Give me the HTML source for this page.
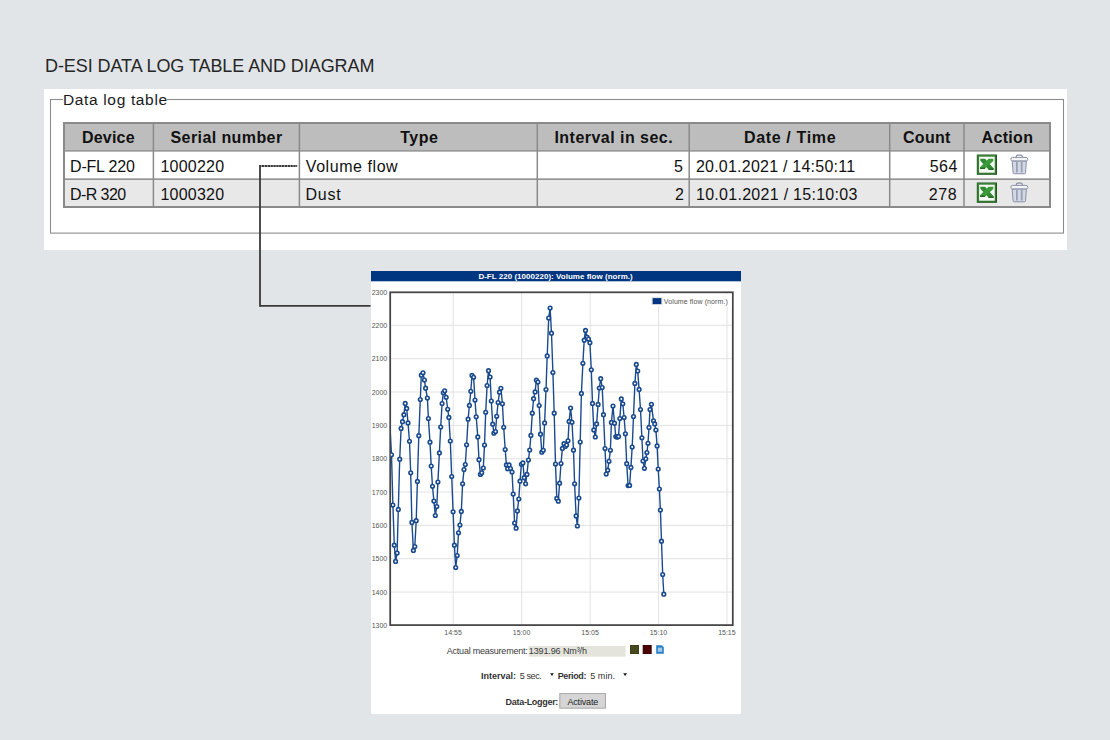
<!DOCTYPE html>
<html><head><meta charset="utf-8"><style>
html,body{margin:0;padding:0;}
body{width:1110px;height:740px;background:#e1e5e8;position:relative;overflow:hidden;font-family:"Liberation Sans",sans-serif;}
svg{position:absolute;left:0;top:0;}
</style></head><body>
<svg width="1110" height="740" viewBox="0 0 1110 740" font-family="Liberation Sans">
<defs><clipPath id="pc"><rect x="390.7" y="293" width="341.5" height="331.4"/></clipPath></defs>
<!-- panel -->
<rect x="44" y="89" width="1023" height="161" fill="#fff"/>
<rect x="50.5" y="99.5" width="1013" height="133.6" fill="none" stroke="#8c8c8c" stroke-width="1.1"/>
<rect x="63" y="94" width="104" height="12" fill="#fff"/>
<!-- table -->
<rect x="63" y="122" width="987.5" height="29" fill="#bdbdbd"/>
<rect x="63" y="151" width="987.5" height="28" fill="#fff"/>
<rect x="63" y="179" width="987.5" height="28" fill="#e8e8e8"/>
<rect x="64" y="123" width="986" height="84" fill="none" stroke="#8a8a8a" stroke-width="2"/>
<rect x="63" y="150.3" width="987" height="1.3" fill="#8a8a8a"/>
<rect x="63" y="178.4" width="987" height="1.5" fill="#8a8a8a"/>
<rect x="152.65" y="122" width="1.5" height="85" fill="#8a8a8a"/><rect x="298.65" y="122" width="1.5" height="85" fill="#8a8a8a"/><rect x="536.55" y="122" width="1.5" height="85" fill="#8a8a8a"/><rect x="688.45" y="122" width="1.5" height="85" fill="#8a8a8a"/><rect x="888.95" y="122" width="1.5" height="85" fill="#8a8a8a"/><rect x="963.25" y="122" width="1.5" height="85" fill="#8a8a8a"/>
<g transform="translate(976.8,154.5)">
<rect x="0" y="0" width="20.2" height="20.3" fill="#1d551d"/>
<rect x="0.5" y="0.5" width="18.6" height="18.8" fill="#3a7f36"/>
<rect x="2.3" y="2.2" width="15.6" height="16" fill="#f6faf4"/>
<path d="M3.5,4.3 L8.2,4.3 L16.8,13.8 L16.8,15.3 L12,15.3 L3.5,6.2 Z" fill="#2f8a30"/>
<path d="M16.5,4.3 L11.8,4.3 L3.2,12.8 L3.2,14.3 L8,14.3 L16.5,6.4 Z" fill="#3d9a3b"/>
<path d="M3.2,13.2 L8.2,13.2 L8.2,14.4 L3.2,14.4z" fill="#1f5f1f"/>
<path d="M11.8,14.2 L16.8,14.2 L16.8,15.4 L11.8,15.4z" fill="#1f5f1f"/>
</g><g transform="translate(976.8,182.5)">
<rect x="0" y="0" width="20.2" height="20.3" fill="#1d551d"/>
<rect x="0.5" y="0.5" width="18.6" height="18.8" fill="#3a7f36"/>
<rect x="2.3" y="2.2" width="15.6" height="16" fill="#f6faf4"/>
<path d="M3.5,4.3 L8.2,4.3 L16.8,13.8 L16.8,15.3 L12,15.3 L3.5,6.2 Z" fill="#2f8a30"/>
<path d="M16.5,4.3 L11.8,4.3 L3.2,12.8 L3.2,14.3 L8,14.3 L16.5,6.4 Z" fill="#3d9a3b"/>
<path d="M3.2,13.2 L8.2,13.2 L8.2,14.4 L3.2,14.4z" fill="#1f5f1f"/>
<path d="M11.8,14.2 L16.8,14.2 L16.8,15.4 L11.8,15.4z" fill="#1f5f1f"/>
</g><g transform="translate(1010,154)">
<path d="M6.3,3.6 v-1 q0,-1.4 1.4,-1.4 h3.2 q1.4,0 1.4,1.4 v1" fill="none" stroke="#8a91a5" stroke-width="1.2"/>
<rect x="0.9" y="3.4" width="16.8" height="3.6" rx="1.6" fill="#f2f4f8" stroke="#8a91a5" stroke-width="1"/>
<path d="M2.2,7.2 h14.2 l-0.9,11.6 q-0.1,1 -1.1,1 h-10.2 q-1,0 -1.1,-1z" fill="#d3d8e5" stroke="#8a91a5" stroke-width="1"/>
<rect x="6" y="8" width="1.8" height="10.5" fill="#9aa1b4"/>
<rect x="10.8" y="8" width="1.8" height="10.5" fill="#9aa1b4"/>
</g><g transform="translate(1010,182)">
<path d="M6.3,3.6 v-1 q0,-1.4 1.4,-1.4 h3.2 q1.4,0 1.4,1.4 v1" fill="none" stroke="#8a91a5" stroke-width="1.2"/>
<rect x="0.9" y="3.4" width="16.8" height="3.6" rx="1.6" fill="#f2f4f8" stroke="#8a91a5" stroke-width="1"/>
<path d="M2.2,7.2 h14.2 l-0.9,11.6 q-0.1,1 -1.1,1 h-10.2 q-1,0 -1.1,-1z" fill="#d3d8e5" stroke="#8a91a5" stroke-width="1"/>
<rect x="6" y="8" width="1.8" height="10.5" fill="#9aa1b4"/>
<rect x="10.8" y="8" width="1.8" height="10.5" fill="#9aa1b4"/>
</g>
<!-- connector -->
<path d="M260,305.9 H370.5" stroke="#3a3a38" stroke-width="1.8" fill="none"/>
<path d="M260,306.8 V166" stroke="#3a3a38" stroke-width="1.8" fill="none"/>
<path d="M259.1,166 H297.2" stroke="#3a3a38" stroke-width="1.8" fill="none" stroke-dasharray="2.4 0.45"/>
<!-- chart -->
<rect x="371" y="271" width="370" height="443" fill="#fff"/>
<rect x="371" y="271" width="370" height="10.3" fill="#003580"/>
<g stroke="#e2e2e2" stroke-width="1"><line x1="453.2" y1="293" x2="453.2" y2="624" /><line x1="521.7" y1="293" x2="521.7" y2="624" /><line x1="590.2" y1="293" x2="590.2" y2="624" /><line x1="658.6" y1="293" x2="658.6" y2="624" /><line x1="727.0" y1="293" x2="727.0" y2="624" /><line x1="391" y1="325.3" x2="732" y2="325.3" /><line x1="391" y1="358.7" x2="732" y2="358.7" /><line x1="391" y1="392.0" x2="732" y2="392.0" /><line x1="391" y1="425.4" x2="732" y2="425.4" /><line x1="391" y1="458.7" x2="732" y2="458.7" /><line x1="391" y1="492.0" x2="732" y2="492.0" /><line x1="391" y1="525.4" x2="732" y2="525.4" /><line x1="391" y1="558.7" x2="732" y2="558.7" /><line x1="391" y1="592.1" x2="732" y2="592.1" /></g>
<rect x="390.2" y="292.3" width="342.6" height="332.8" fill="none" stroke="#444" stroke-width="1.75"/>
<rect x="650.5" y="294" width="81" height="12.5" fill="#fff"/><rect x="652" y="297.6" width="10" height="7" fill="none" stroke="#e0e0e0" stroke-width="1"/>
<rect x="652.6" y="298.1" width="8.8" height="6" fill="#003580"/>
<g clip-path="url(#pc)">
<path d="M388.0,390.0 L391.5,454.8 L392.9,505.1 L394.3,545.2 L395.6,561.4 L397.1,553.1 L398.3,509.4 L399.7,459.2 L401.1,428.4 L402.5,421.7 L403.9,414.7 L405.2,403.4 L406.7,408.4 L408.0,422.9 L409.5,441.3 L410.7,472.8 L411.9,522.4 L413.4,550.4 L414.8,546.5 L416.2,520.7 L417.4,481.4 L418.8,435.7 L420.3,399.5 L421.3,375.2 L423.0,372.8 L424.4,380.1 L425.6,388.2 L427.4,398.1 L428.4,418.6 L430.0,442.2 L431.2,466.1 L432.5,486.3 L433.9,501.1 L435.3,515.5 L436.8,506.6 L437.9,482.1 L439.4,452.9 L440.7,427.1 L442.1,403.5 L443.3,392.8 L444.7,390.8 L446.2,397.3 L447.7,409.3 L448.9,417.4 L450.3,441.0 L451.7,476.5 L453.1,511.8 L454.4,545.2 L455.7,567.6 L457.2,555.5 L458.5,532.8 L459.9,525.1 L461.3,511.4 L462.6,483.8 L464.0,469.6 L465.3,464.6 L466.6,444.8 L468.1,419.2 L469.4,405.4 L470.8,391.3 L472.0,375.4 L473.6,377.3 L475.0,400.1 L476.2,416.8 L477.8,436.9 L479.0,459.7 L480.4,474.4 L481.7,472.8 L483.3,468.0 L484.5,445.1 L485.7,412.3 L487.1,385.5 L488.5,370.7 L490.1,377.0 L491.3,401.0 L492.7,424.2 L493.9,433.2 L495.5,431.5 L496.7,416.3 L498.1,402.6 L499.5,392.2 L500.9,388.3 L502.4,403.8 L503.7,427.3 L505.2,449.5 L506.4,464.9 L507.6,468.8 L509.1,464.9 L510.5,468.6 L512.0,472.0 L513.2,494.1 L514.6,523.1 L516.1,528.2 L517.4,510.9 L518.8,499.0 L520.0,481.2 L521.4,464.3 L522.9,462.9 L524.2,477.7 L525.6,483.8 L526.9,474.4 L528.4,460.1 L529.7,450.0 L530.9,435.4 L532.3,413.2 L533.6,398.7 L535.1,391.9 L536.4,380.2 L537.9,382.1 L539.2,405.6 L540.5,434.2 L541.8,452.2 L543.3,450.3 L544.6,422.9 L546.0,389.6 L547.2,355.9 L548.7,318.1 L550.1,308.0 L551.5,333.2 L552.9,372.6 L554.2,413.2 L555.5,464.1 L556.8,498.4 L558.3,501.2 L559.6,483.2 L561.0,463.5 L562.4,448.4 L564.0,443.7 L565.3,446.5 L566.6,445.1 L568.0,440.8 L569.1,421.4 L570.6,408.0 L572.0,422.3 L573.5,450.2 L574.6,483.8 L576.1,515.9 L577.4,526.0 L578.9,498.0 L580.2,442.1 L581.4,393.4 L582.9,363.3 L584.2,340.2 L585.5,330.4 L587.0,337.2 L588.5,339.0 L589.9,342.7 L591.3,369.8 L592.5,403.4 L593.8,429.9 L595.3,437.0 L596.6,423.9 L598.1,404.4 L599.3,388.0 L600.7,378.7 L602.2,387.6 L603.5,414.7 L605.0,448.6 L606.2,474.1 L607.7,470.2 L609.0,461.3 L610.4,450.3 L611.4,422.4 L613.0,406.0 L614.5,423.2 L615.8,436.6 L617.2,437.2 L618.5,436.4 L619.8,418.6 L621.3,398.9 L622.8,403.8 L624.1,417.5 L625.4,433.8 L626.7,463.7 L628.1,485.6 L629.6,485.4 L630.9,467.4 L632.2,447.0 L633.5,416.6 L634.9,383.4 L636.3,364.4 L637.7,371.1 L639.1,389.4 L640.5,409.5 L641.9,437.8 L643.0,461.0 L644.4,468.3 L645.8,458.8 L646.9,452.6 L648.0,443.3 L649.0,427.4 L650.0,409.6 L651.4,404.3 L653.5,420.8 L654.7,423.9 L655.9,430.1 L657.1,445.9 L658.2,469.0 L659.4,489.1 L660.4,510.0 L661.5,541.2 L662.7,574.5 L663.8,594.2" stroke="#1a4a8e" stroke-width="1.4" fill="none" stroke-linejoin="round"/>
<g fill="#fff" stroke="#1a4a8e" stroke-width="1.6"><circle cx="388.0" cy="390.0" r="1.8"/><circle cx="391.5" cy="454.8" r="1.8"/><circle cx="392.9" cy="505.1" r="1.8"/><circle cx="394.3" cy="545.2" r="1.8"/><circle cx="395.6" cy="561.4" r="1.8"/><circle cx="397.1" cy="553.1" r="1.8"/><circle cx="398.3" cy="509.4" r="1.8"/><circle cx="399.7" cy="459.2" r="1.8"/><circle cx="401.1" cy="428.4" r="1.8"/><circle cx="402.5" cy="421.7" r="1.8"/><circle cx="403.9" cy="414.7" r="1.8"/><circle cx="405.2" cy="403.4" r="1.8"/><circle cx="406.7" cy="408.4" r="1.8"/><circle cx="408.0" cy="422.9" r="1.8"/><circle cx="409.5" cy="441.3" r="1.8"/><circle cx="410.7" cy="472.8" r="1.8"/><circle cx="411.9" cy="522.4" r="1.8"/><circle cx="413.4" cy="550.4" r="1.8"/><circle cx="414.8" cy="546.5" r="1.8"/><circle cx="416.2" cy="520.7" r="1.8"/><circle cx="417.4" cy="481.4" r="1.8"/><circle cx="418.8" cy="435.7" r="1.8"/><circle cx="420.3" cy="399.5" r="1.8"/><circle cx="421.3" cy="375.2" r="1.8"/><circle cx="423.0" cy="372.8" r="1.8"/><circle cx="424.4" cy="380.1" r="1.8"/><circle cx="425.6" cy="388.2" r="1.8"/><circle cx="427.4" cy="398.1" r="1.8"/><circle cx="428.4" cy="418.6" r="1.8"/><circle cx="430.0" cy="442.2" r="1.8"/><circle cx="431.2" cy="466.1" r="1.8"/><circle cx="432.5" cy="486.3" r="1.8"/><circle cx="433.9" cy="501.1" r="1.8"/><circle cx="435.3" cy="515.5" r="1.8"/><circle cx="436.8" cy="506.6" r="1.8"/><circle cx="437.9" cy="482.1" r="1.8"/><circle cx="439.4" cy="452.9" r="1.8"/><circle cx="440.7" cy="427.1" r="1.8"/><circle cx="442.1" cy="403.5" r="1.8"/><circle cx="443.3" cy="392.8" r="1.8"/><circle cx="444.7" cy="390.8" r="1.8"/><circle cx="446.2" cy="397.3" r="1.8"/><circle cx="447.7" cy="409.3" r="1.8"/><circle cx="448.9" cy="417.4" r="1.8"/><circle cx="450.3" cy="441.0" r="1.8"/><circle cx="451.7" cy="476.5" r="1.8"/><circle cx="453.1" cy="511.8" r="1.8"/><circle cx="454.4" cy="545.2" r="1.8"/><circle cx="455.7" cy="567.6" r="1.8"/><circle cx="457.2" cy="555.5" r="1.8"/><circle cx="458.5" cy="532.8" r="1.8"/><circle cx="459.9" cy="525.1" r="1.8"/><circle cx="461.3" cy="511.4" r="1.8"/><circle cx="462.6" cy="483.8" r="1.8"/><circle cx="464.0" cy="469.6" r="1.8"/><circle cx="465.3" cy="464.6" r="1.8"/><circle cx="466.6" cy="444.8" r="1.8"/><circle cx="468.1" cy="419.2" r="1.8"/><circle cx="469.4" cy="405.4" r="1.8"/><circle cx="470.8" cy="391.3" r="1.8"/><circle cx="472.0" cy="375.4" r="1.8"/><circle cx="473.6" cy="377.3" r="1.8"/><circle cx="475.0" cy="400.1" r="1.8"/><circle cx="476.2" cy="416.8" r="1.8"/><circle cx="477.8" cy="436.9" r="1.8"/><circle cx="479.0" cy="459.7" r="1.8"/><circle cx="480.4" cy="474.4" r="1.8"/><circle cx="481.7" cy="472.8" r="1.8"/><circle cx="483.3" cy="468.0" r="1.8"/><circle cx="484.5" cy="445.1" r="1.8"/><circle cx="485.7" cy="412.3" r="1.8"/><circle cx="487.1" cy="385.5" r="1.8"/><circle cx="488.5" cy="370.7" r="1.8"/><circle cx="490.1" cy="377.0" r="1.8"/><circle cx="491.3" cy="401.0" r="1.8"/><circle cx="492.7" cy="424.2" r="1.8"/><circle cx="493.9" cy="433.2" r="1.8"/><circle cx="495.5" cy="431.5" r="1.8"/><circle cx="496.7" cy="416.3" r="1.8"/><circle cx="498.1" cy="402.6" r="1.8"/><circle cx="499.5" cy="392.2" r="1.8"/><circle cx="500.9" cy="388.3" r="1.8"/><circle cx="502.4" cy="403.8" r="1.8"/><circle cx="503.7" cy="427.3" r="1.8"/><circle cx="505.2" cy="449.5" r="1.8"/><circle cx="506.4" cy="464.9" r="1.8"/><circle cx="507.6" cy="468.8" r="1.8"/><circle cx="509.1" cy="464.9" r="1.8"/><circle cx="510.5" cy="468.6" r="1.8"/><circle cx="512.0" cy="472.0" r="1.8"/><circle cx="513.2" cy="494.1" r="1.8"/><circle cx="514.6" cy="523.1" r="1.8"/><circle cx="516.1" cy="528.2" r="1.8"/><circle cx="517.4" cy="510.9" r="1.8"/><circle cx="518.8" cy="499.0" r="1.8"/><circle cx="520.0" cy="481.2" r="1.8"/><circle cx="521.4" cy="464.3" r="1.8"/><circle cx="522.9" cy="462.9" r="1.8"/><circle cx="524.2" cy="477.7" r="1.8"/><circle cx="525.6" cy="483.8" r="1.8"/><circle cx="526.9" cy="474.4" r="1.8"/><circle cx="528.4" cy="460.1" r="1.8"/><circle cx="529.7" cy="450.0" r="1.8"/><circle cx="530.9" cy="435.4" r="1.8"/><circle cx="532.3" cy="413.2" r="1.8"/><circle cx="533.6" cy="398.7" r="1.8"/><circle cx="535.1" cy="391.9" r="1.8"/><circle cx="536.4" cy="380.2" r="1.8"/><circle cx="537.9" cy="382.1" r="1.8"/><circle cx="539.2" cy="405.6" r="1.8"/><circle cx="540.5" cy="434.2" r="1.8"/><circle cx="541.8" cy="452.2" r="1.8"/><circle cx="543.3" cy="450.3" r="1.8"/><circle cx="544.6" cy="422.9" r="1.8"/><circle cx="546.0" cy="389.6" r="1.8"/><circle cx="547.2" cy="355.9" r="1.8"/><circle cx="548.7" cy="318.1" r="1.8"/><circle cx="550.1" cy="308.0" r="1.8"/><circle cx="551.5" cy="333.2" r="1.8"/><circle cx="552.9" cy="372.6" r="1.8"/><circle cx="554.2" cy="413.2" r="1.8"/><circle cx="555.5" cy="464.1" r="1.8"/><circle cx="556.8" cy="498.4" r="1.8"/><circle cx="558.3" cy="501.2" r="1.8"/><circle cx="559.6" cy="483.2" r="1.8"/><circle cx="561.0" cy="463.5" r="1.8"/><circle cx="562.4" cy="448.4" r="1.8"/><circle cx="564.0" cy="443.7" r="1.8"/><circle cx="565.3" cy="446.5" r="1.8"/><circle cx="566.6" cy="445.1" r="1.8"/><circle cx="568.0" cy="440.8" r="1.8"/><circle cx="569.1" cy="421.4" r="1.8"/><circle cx="570.6" cy="408.0" r="1.8"/><circle cx="572.0" cy="422.3" r="1.8"/><circle cx="573.5" cy="450.2" r="1.8"/><circle cx="574.6" cy="483.8" r="1.8"/><circle cx="576.1" cy="515.9" r="1.8"/><circle cx="577.4" cy="526.0" r="1.8"/><circle cx="578.9" cy="498.0" r="1.8"/><circle cx="580.2" cy="442.1" r="1.8"/><circle cx="581.4" cy="393.4" r="1.8"/><circle cx="582.9" cy="363.3" r="1.8"/><circle cx="584.2" cy="340.2" r="1.8"/><circle cx="585.5" cy="330.4" r="1.8"/><circle cx="587.0" cy="337.2" r="1.8"/><circle cx="588.5" cy="339.0" r="1.8"/><circle cx="589.9" cy="342.7" r="1.8"/><circle cx="591.3" cy="369.8" r="1.8"/><circle cx="592.5" cy="403.4" r="1.8"/><circle cx="593.8" cy="429.9" r="1.8"/><circle cx="595.3" cy="437.0" r="1.8"/><circle cx="596.6" cy="423.9" r="1.8"/><circle cx="598.1" cy="404.4" r="1.8"/><circle cx="599.3" cy="388.0" r="1.8"/><circle cx="600.7" cy="378.7" r="1.8"/><circle cx="602.2" cy="387.6" r="1.8"/><circle cx="603.5" cy="414.7" r="1.8"/><circle cx="605.0" cy="448.6" r="1.8"/><circle cx="606.2" cy="474.1" r="1.8"/><circle cx="607.7" cy="470.2" r="1.8"/><circle cx="609.0" cy="461.3" r="1.8"/><circle cx="610.4" cy="450.3" r="1.8"/><circle cx="611.4" cy="422.4" r="1.8"/><circle cx="613.0" cy="406.0" r="1.8"/><circle cx="614.5" cy="423.2" r="1.8"/><circle cx="615.8" cy="436.6" r="1.8"/><circle cx="617.2" cy="437.2" r="1.8"/><circle cx="618.5" cy="436.4" r="1.8"/><circle cx="619.8" cy="418.6" r="1.8"/><circle cx="621.3" cy="398.9" r="1.8"/><circle cx="622.8" cy="403.8" r="1.8"/><circle cx="624.1" cy="417.5" r="1.8"/><circle cx="625.4" cy="433.8" r="1.8"/><circle cx="626.7" cy="463.7" r="1.8"/><circle cx="628.1" cy="485.6" r="1.8"/><circle cx="629.6" cy="485.4" r="1.8"/><circle cx="630.9" cy="467.4" r="1.8"/><circle cx="632.2" cy="447.0" r="1.8"/><circle cx="633.5" cy="416.6" r="1.8"/><circle cx="634.9" cy="383.4" r="1.8"/><circle cx="636.3" cy="364.4" r="1.8"/><circle cx="637.7" cy="371.1" r="1.8"/><circle cx="639.1" cy="389.4" r="1.8"/><circle cx="640.5" cy="409.5" r="1.8"/><circle cx="641.9" cy="437.8" r="1.8"/><circle cx="643.0" cy="461.0" r="1.8"/><circle cx="644.4" cy="468.3" r="1.8"/><circle cx="645.8" cy="458.8" r="1.8"/><circle cx="646.9" cy="452.6" r="1.8"/><circle cx="648.0" cy="443.3" r="1.8"/><circle cx="649.0" cy="427.4" r="1.8"/><circle cx="650.0" cy="409.6" r="1.8"/><circle cx="651.4" cy="404.3" r="1.8"/><circle cx="653.5" cy="420.8" r="1.8"/><circle cx="654.7" cy="423.9" r="1.8"/><circle cx="655.9" cy="430.1" r="1.8"/><circle cx="657.1" cy="445.9" r="1.8"/><circle cx="658.2" cy="469.0" r="1.8"/><circle cx="659.4" cy="489.1" r="1.8"/><circle cx="660.4" cy="510.0" r="1.8"/><circle cx="661.5" cy="541.2" r="1.8"/><circle cx="662.7" cy="574.5" r="1.8"/><circle cx="663.8" cy="594.2" r="1.8"/></g>
</g>
<!-- controls -->
<rect x="528.6" y="645.9" width="97" height="10.8" fill="#e4e4dc"/>
<rect x="630" y="645" width="9" height="9" fill="#3e3e14"/>
<rect x="630.8" y="645.8" width="7.4" height="7.4" fill="#474720"/>
<rect x="642.7" y="645" width="9" height="9" fill="#3a0202"/>
<rect x="643.5" y="645.8" width="7.4" height="7.4" fill="#4a0404"/>
<path d="M656.2,645.2 h5.6 l2,2 v6.6 h-7.6z" fill="#2a7fc4"/>
<rect x="657.8" y="647.6" width="4.4" height="4.2" fill="#9fcbee"/>
<path d="M550.2,673.2 h3.6 l-1.8,2.8z" fill="#111"/>
<path d="M623.2,673.2 h3.8 l-1.9,2.8z" fill="#111"/>
<rect x="559.8" y="693.6" width="45.7" height="14.6" fill="#d5d5d5" stroke="#a8a8a8" stroke-width="1"/>
<text x="44.96" y="72.00" font-size="18" letter-spacing="-0.073" fill="#262626">D-ESI DATA LOG TABLE AND DIAGRAM</text><text x="62.96" y="105.30" font-size="15.5" letter-spacing="0.654" fill="#1a1a1a">Data log table</text><text x="81.96" y="142.80" font-size="16" letter-spacing="0.200" font-weight="bold" fill="#111">Device</text><text x="170.52" y="142.80" font-size="16" letter-spacing="0.408" font-weight="bold" fill="#111">Serial number</text><text x="400.34" y="142.80" font-size="16" letter-spacing="0.453" font-weight="bold" fill="#111">Type</text><text x="554.46" y="142.80" font-size="16" letter-spacing="0.464" font-weight="bold" fill="#111">Interval in sec.</text><text x="743.96" y="142.80" font-size="16" letter-spacing="0.656" font-weight="bold" fill="#111">Date / Time</text><text x="902.96" y="142.80" font-size="16" letter-spacing="0.310" font-weight="bold" fill="#111">Count</text><text x="981.50" y="142.80" font-size="16" letter-spacing="0.340" font-weight="bold" fill="#111">Action</text><text x="70.02" y="171.80" font-size="16" letter-spacing="-0.191" fill="#111">D-FL 220</text><text x="70.02" y="199.90" font-size="16" letter-spacing="-0.577" fill="#111">D-R 320</text><text x="160.50" y="171.80" font-size="16" letter-spacing="0.220" fill="#111">1000220</text><text x="160.50" y="199.90" font-size="16" letter-spacing="0.220" fill="#111">1000320</text><text x="305.82" y="171.80" font-size="16" letter-spacing="0.556" fill="#111">Volume flow</text><text x="305.52" y="199.90" font-size="16" letter-spacing="0.727" fill="#111">Dust</text><text x="674.06" y="171.80" font-size="16" fill="#111">5</text><text x="674.92" y="199.90" font-size="16" fill="#111">2</text><text x="695.90" y="171.80" font-size="16" letter-spacing="0.232" fill="#111">20.01.2021 / 14:50:11</text><text x="696.00" y="199.90" font-size="16" letter-spacing="0.283" fill="#111">10.01.2021 / 15:10:03</text><text x="929.76" y="171.80" font-size="16" letter-spacing="0.440" fill="#111">564</text><text x="928.80" y="199.90" font-size="16" letter-spacing="0.600" fill="#111">278</text><text x="478.38" y="278.60" font-size="8" letter-spacing="0.021" font-weight="bold" fill="#fff">D-FL 220 (1000220): Volume flow (norm.)</text><text x="663.87" y="304.10" font-size="7" letter-spacing="0.096" fill="#555">Volume flow (norm.)</text><text x="371.67" y="294.60" font-size="7" fill="#555">2300</text><text x="371.67" y="327.94" font-size="7" fill="#555">2200</text><text x="371.67" y="361.28" font-size="7" fill="#555">2100</text><text x="371.67" y="394.62" font-size="7" fill="#555">2000</text><text x="371.67" y="427.96" font-size="7" fill="#555">1900</text><text x="371.67" y="461.30" font-size="7" fill="#555">1800</text><text x="371.67" y="494.64" font-size="7" fill="#555">1700</text><text x="371.67" y="527.98" font-size="7" fill="#555">1600</text><text x="371.67" y="561.32" font-size="7" fill="#555">1500</text><text x="371.67" y="594.66" font-size="7" fill="#555">1400</text><text x="371.67" y="628.00" font-size="7" fill="#555">1300</text><text x="444.33" y="635.10" font-size="7" fill="#555">14:55</text><text x="512.81" y="635.10" font-size="7" fill="#555">15:00</text><text x="581.33" y="635.10" font-size="7" fill="#555">15:05</text><text x="649.71" y="635.10" font-size="7" fill="#555">15:10</text><text x="718.13" y="635.10" font-size="7" fill="#555">15:15</text><text x="446.80" y="654.40" font-size="9" letter-spacing="-0.228" fill="#3a3a3a">Actual measurement:</text><text x="528.83" y="654.40" font-size="9" letter-spacing="-0.123" fill="#3a3a3a">1391.96 Nm³/h</text><text x="481.02" y="678.60" font-size="9" letter-spacing="0.009" font-weight="bold" fill="#333">Interval:</text><text x="519.74" y="678.60" font-size="9" letter-spacing="-0.383" fill="#333">5 sec.</text><text x="557.71" y="678.60" font-size="9" letter-spacing="-0.370" font-weight="bold" fill="#333">Period:</text><text x="590.34" y="678.60" font-size="9" letter-spacing="0.018" fill="#333">5 min.</text><text x="505.62" y="704.60" font-size="9" letter-spacing="-0.295" font-weight="bold" fill="#333">Data-Logger:</text><text x="567.40" y="704.60" font-size="9" letter-spacing="-0.156" fill="#222">Activate</text>
</svg>
</body></html>
